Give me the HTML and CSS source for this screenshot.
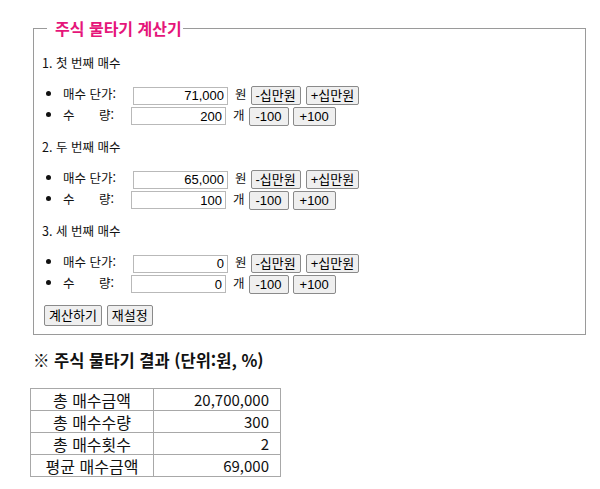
FILE: index.html
```html
<!DOCTYPE html>
<html lang="ko">
<head>
<meta charset="utf-8">
<link rel="stylesheet" href="styles.css">
</head>
<body>
<div class="page">
  <fieldset class="calc">
    <legend class="calc-title">주식 물타기 계산기</legend>

    <div class="buy">
      <div class="buy-title">1. 첫 번째 매수</div>
      <ul class="rows">
        <li class="row"><span class="label">매수 단가:</span><input class="num" type="text" value="71,000"><span class="unit">원</span><button class="btn btn-ko">-십만원</button><button class="btn btn-ko">+십만원</button></li>
        <li class="row"><span class="label label-qty">수&nbsp;&nbsp;&nbsp;&nbsp;&nbsp;&nbsp;&nbsp;량:</span><input class="num" type="text" value="200"><span class="unit">개</span><button class="btn btn-num">-100</button><button class="btn btn-num">+100</button></li>
      </ul>
    </div>

    <div class="buy">
      <div class="buy-title">2. 두 번째 매수</div>
      <ul class="rows">
        <li class="row"><span class="label">매수 단가:</span><input class="num" type="text" value="65,000"><span class="unit">원</span><button class="btn btn-ko">-십만원</button><button class="btn btn-ko">+십만원</button></li>
        <li class="row"><span class="label label-qty">수&nbsp;&nbsp;&nbsp;&nbsp;&nbsp;&nbsp;&nbsp;량:</span><input class="num" type="text" value="100"><span class="unit">개</span><button class="btn btn-num">-100</button><button class="btn btn-num">+100</button></li>
      </ul>
    </div>

    <div class="buy">
      <div class="buy-title">3. 세 번째 매수</div>
      <ul class="rows">
        <li class="row"><span class="label">매수 단가:</span><input class="num" type="text" value="0"><span class="unit">원</span><button class="btn btn-ko">-십만원</button><button class="btn btn-ko">+십만원</button></li>
        <li class="row"><span class="label label-qty">수&nbsp;&nbsp;&nbsp;&nbsp;&nbsp;&nbsp;&nbsp;량:</span><input class="num" type="text" value="0"><span class="unit">개</span><button class="btn btn-num">-100</button><button class="btn btn-num">+100</button></li>
      </ul>
    </div>

    <div class="actions">
      <button class="btn btn-ko btn-main">계산하기</button><button class="btn btn-ko btn-main">재설정</button>
    </div>
  </fieldset>

  <h3 class="result-title">※ 주식 물타기 결과 (단위:원, %)</h3>

  <table class="result">
    <tr><td class="k">총 매수금액</td><td class="v">20,700,000</td></tr>
    <tr><td class="k">총 매수수량</td><td class="v">300</td></tr>
    <tr><td class="k">총 매수횟수</td><td class="v">2</td></tr>
    <tr><td class="k">평균 매수금액</td><td class="v">69,000</td></tr>
  </table>
</div>
</body>
</html>
```

FILE: styles.css
```css
html, body {
  margin: 0;
  padding: 0;
  background: #ffffff;
}
body {
  font-family: "Noto Sans CJK KR", "Noto Sans", sans-serif;
  color: #111;
}
.page {
  padding: 18px 0 0 33px;
  width: 553px;
}
.calc {
  margin: 0;
  padding: 0 8px 8px 8px;
  border: 1px solid #9a9a9a;
  width: 553px;
  box-sizing: border-box;
}
.calc-title {
  margin-left: 5px;
  padding: 0 1px 0 8px;
  color: #e5157a;
  font-weight: bold;
  font-size: 16px;
  line-height: 20px;
}
.buy-title {
  font-size: 12.5px;
  line-height: 16px;
  margin-top: 14px;
}
.buy:first-of-type .buy-title {
  margin-top: 17px;
}
.rows {
  margin: 13px 0 0 0;
  padding-left: 21px;
  list-style: disc;
}
.row {
  font-size: 12.5px;
  line-height: 20.5px;
  height: 20.5px;
}
.label {
  display: inline-block;
  width: 70px;
}
.label-qty {
  width: 68px;
}
.num {
  width: 95px;
  height: 18px;
  box-sizing: border-box;
  border: 1px solid #b9b9b9;
  padding: 0 3px;
  text-align: right;
  font-family: "Liberation Sans", Arial, sans-serif;
  font-size: 13px;
  color: #000;
  vertical-align: middle;
  margin: 0;
}
.unit {
  margin: 0 4px 0 7px;
}
.btn {
  height: 19px;
  line-height: 15px;
  margin: 0 5px 0 0;
  border: 1px solid #8a8a8a;
  border-radius: 2px;
  background: #efefef;
  color: #000;
  vertical-align: middle;
}
.btn-ko {
  font-family: "Liberation Sans", "Noto Sans CJK KR", sans-serif;
  font-size: 13px;
  padding: 0 4px;
}
.btn-num {
  font-family: "Liberation Sans", Arial, sans-serif;
  font-size: 13px;
  padding: 0 6px;
  margin-right: 4px;
}
.actions {
  margin-top: 12px;
  margin-left: 2px;
  display: flex;
  gap: 5px;
}
.btn-main {
  height: 21px;
  margin: 0;
}
.result-title {
  margin: 14px 0 0 0;
  font-size: 16.5px;
  line-height: 22px;
  font-weight: bold;
}
.result {
  margin: 17px 0 0 -3px;
  border-collapse: collapse;
  width: 251px;
}
.result td {
  border: 1px solid #a8a8a8;
  font-size: 15px;
  height: 21px;
  padding: 0 11px;
  line-height: 20px;
}
.result .k {
  text-align: center;
  width: 100px;
  font-size: 16px;
}
.result .v {
  text-align: right;
}
```
